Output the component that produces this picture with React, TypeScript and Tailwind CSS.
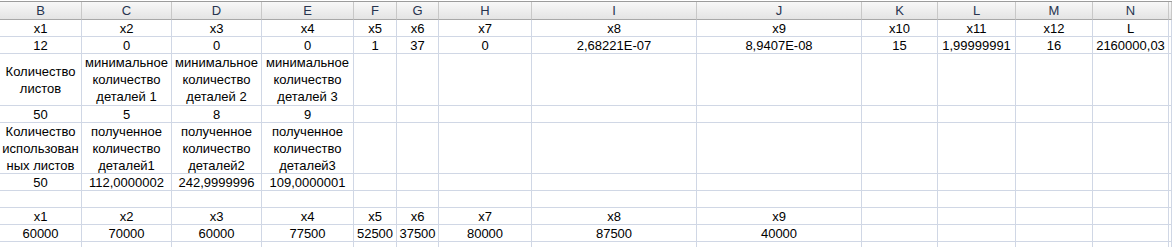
import React from 'react';

const columns = ['B', 'C', 'D', 'E', 'F', 'G', 'H', 'I', 'J', 'K', 'L', 'M', 'N', ''];

// row heights in px, matching the sheet's row sizes
const rowHeights = ['h-[17px]', 'h-[17px]', 'h-[52px]', 'h-[17px]', 'h-[51px]', 'h-[17px]', 'h-[17px]', 'h-[17px]', 'h-[17px]', 'h-[17px]'];

const rows: string[][] = [
  ['x1', 'x2', 'x3', 'x4', 'x5', 'x6', 'x7', 'x8', 'x9', 'x10', 'x11', 'x12', 'L'],
  ['12', '0', '0', '0', '1', '37', '0', '2,68221E-07', '8,9407E-08', '15', '1,99999991', '16', '2160000,03'],
  [
    'Количество\nлистов',
    'минимальное\nколичество\nдеталей 1',
    'минимальное\nколичество\nдеталей 2',
    'минимальное\nколичество\nдеталей 3',
  ],
  ['50', '5', '8', '9'],
  [
    'Количество\nиспользован\nных листов',
    'полученное\nколичество\nдеталей1',
    'полученное\nколичество\nдеталей2',
    'полученное\nколичество\nдеталей3',
  ],
  ['50', '112,0000002', '242,9999996', '109,0000001'],
  [],
  ['x1', 'x2', 'x3', 'x4', 'x5', 'x6', 'x7', 'x8', 'x9'],
  ['60000', '70000', '60000', '77500', '52500', '37500', '80000', '87500', '40000'],
  [],
];

const gridCols = 'grid grid-cols-[82px_90px_90px_92px_43px_42px_93px_165px_165px_76px_78px_77px_76px_1fr]';

export default function App() {
  return (
    <div className="w-[1172px] h-[247px] overflow-hidden bg-white pt-px font-['Liberation_Sans',Arial,sans-serif] text-[13px] text-black">
      {/* Column letters */}
      <div className={`${gridCols} h-[19px] border-t border-[#9c9c9c]`}>
        {columns.map((c, i) => (
          <div
            key={i}
            className="flex items-center justify-center bg-gradient-to-b from-[#f8f8f8] to-[#e4e4e4] border-r border-b border-r-[#c8c8c8] border-b-[#a8a8a8] text-[#27344f] leading-none"
          >
            {c}
          </div>
        ))}
      </div>

      {/* Sheet cells */}
      {rows.map((row, r) => (
        <div key={r} className={`${gridCols} ${rowHeights[r]}`}>
          {columns.map((_, c) => (
            <div
              key={c}
              className="flex items-center justify-center border-r border-b border-[#d0d7e5] whitespace-pre-line text-center leading-[17px] overflow-hidden"
            >
              {row[c] ?? ''}
            </div>
          ))}
        </div>
      ))}
    </div>
  );
}
